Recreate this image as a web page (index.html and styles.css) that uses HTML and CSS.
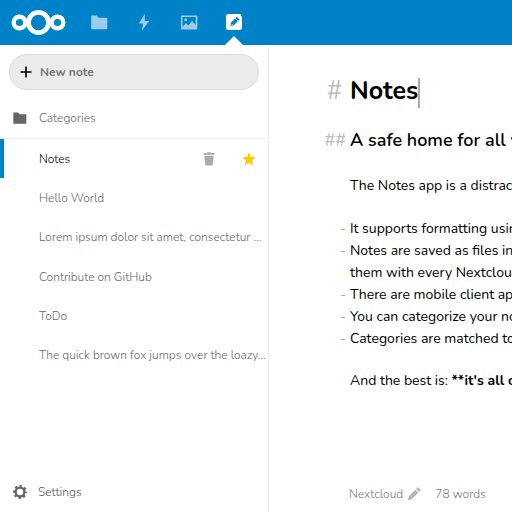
FILE: index.html
```html
<!DOCTYPE html>
<html lang="en">
<head>
<meta charset="utf-8">
<title>Notes - Nextcloud</title>
<link rel="stylesheet" href="styles.css">
</head>
<body>
<header class="topbar">
  <a class="logo" href="#" aria-label="Nextcloud">
    <svg width="56" height="26" viewBox="0 0 56 26" fill="none" stroke="#fff" stroke-width="4.400"><circle cx="27.500" cy="13.500" r="10.1" stroke-width="4.800"/><circle cx="8.500" cy="13.500" r="5.800"/><circle cx="46.500" cy="13.500" r="5.800"/></svg>
  </a>
  <nav class="apps">
    <a class="app" href="#" aria-label="Files"><svg width="18" height="18" viewBox="0 0 18 18"><path fill="currentColor" d="M1.500 2.500h5.200l2 2.200H16.600q.7 0 .7.800v10q0 .8-.7.800H1.900q-.7 0-.7-.8V3.300q0-.8.300-.8z"/></svg></a>
    <a class="app" href="#" aria-label="Activity"><svg width="18" height="18" viewBox="0 0 18 18"><path fill="currentColor" d="M9.800 1 3.800 10.500h4.200L7 17.500 14.200 8h-4.400z"/></svg></a>
    <a class="app" href="#" aria-label="Photos"><svg width="18" height="18" viewBox="0 0 18 18"><path fill="currentColor" fill-rule="evenodd" d="M1.700 2.500h14.800q.8 0 .8.800v12.400q0 .8-.8.800H1.700q-.8 0-.8-.8V3.300q0-.8.8-.8zM2.500 4.100v10.100l3.400-4.200 2.400 2.600L12 8l3.700 4V4.100z"/><circle cx="5.700" cy="6.800" r="1.500" fill="currentColor"/></svg></a>
    <a class="app app-active" href="#" aria-label="Notes" aria-current="page"><svg width="18" height="18" viewBox="0 0 18 18"><path fill="#fff" d="M3.500 1H14.500q1.200 0 1.800.6-.2.600-.6 1 1.300 1 1.300 2.400v9.500Q17 17 14.500 17h-11Q1 17 1 14.500v-11Q1 1 3.500 1z"/><path fill="#0082c9" d="m5.200 13.500.9-4L11.800 3.800l2.800 2.800-5.700 5.700z"/><path stroke="#fff" stroke-width=".9" d="m10.200 5.200 3 3M6.200 12.500l1.500-1.500"/></svg></a>
  </nav>
</header>
<div class="layout">
  <aside class="sidebar">
    <button class="new-note" type="button"><svg width="12" height="12" viewBox="0 0 12 12"><path d="M6 .5v11M.5 6h11" stroke="#000" stroke-width="1.600"/></svg>New note</button>
    <a class="categories" href="#"><svg width="14" height="14" viewBox="0 0 14 14"><path fill="#666" d="M.3 1.500h4.800l1.600 1.700h6.600v9.600H.3z"/></svg>Categories</a>
    <ul class="notes">
      <li class="note note-active"><a class="note-title" href="#">Notes</a>
        <button class="note-action" type="button" aria-label="Delete note"><svg width="14" height="14" viewBox="0 0 14 14"><path fill="#aaa" d="M5 1q0-.8.800-.8h2.500q.8 0 .8.800h3.400v1.800H1.500V1zM2.300 3.800h9.400l-1 8.700q-.1 1-1 1H4.300q-.9 0-1-1z"/></svg></button>
        <button class="note-action" type="button" aria-label="Favorite"><svg width="14" height="14" viewBox="0 0 14 14"><path fill="#fc0" d="m7 .3 1.900 4.800 4.900.2-3.900 3.200 1.500 5L7 10.700l-4.400 2.800 1.500-5L.2 5.300l4.900-.2z"/></svg></button></li>
      <li class="note"><a class="note-title" href="#">Hello World</a></li>
      <li class="note"><a class="note-title" href="#">Lorem ipsum dolor sit amet, consectetur ...</a></li>
      <li class="note"><a class="note-title" href="#">Contribute on GitHub</a></li>
      <li class="note"><a class="note-title" href="#">ToDo</a></li>
      <li class="note"><a class="note-title" href="#">The quick brown fox jumps over the loazy...</a></li>
    </ul>
    <button class="settings" type="button"><svg width="14" height="14" viewBox="0 0 14 14" fill="none" stroke="#666"><circle cx="7" cy="7" r="4.400" stroke-width="2.400"/><circle cx="7" cy="7" r="6" stroke-width="2" stroke-dasharray="2.356" stroke-dashoffset="1.178"/></svg>Settings</button>
  </aside>
  <main class="editor">
    <article class="document">
      <div class="line title"><span class="mark">#</span><h1 class="text">Notes<span class="caret"></span></h1></div>
      <div class="line subtitle"><span class="mark">##</span><h2 class="text">A safe home for all your notes</h2></div>
      <p class="line intro"><span class="text">The Notes app is a distraction free notes taking app</span></p>
      <ul class="points">
        <li class="line"><span class="mark">-</span><span class="text">It supports formatting using Markdown syntax</span></li>
        <li class="line"><span class="mark">-</span><span class="text">Notes are saved as files in your Nextcloud<br>them with every Nextcloud client</span></li>
        <li class="line"><span class="mark">-</span><span class="text">There are mobile client apps available</span></li>
        <li class="line"><span class="mark">-</span><span class="text">You can categorize your notes</span></li>
        <li class="line"><span class="mark">-</span><span class="text">Categories are matched to folders</span></li>
      </ul>
      <p class="line"><span class="text">And the best is: <strong>**it's all open source**</strong></span></p>
    </article>
    <footer class="meta"><span>Nextcloud</span><button class="edit" type="button" aria-label="Edit category"><svg width="14" height="14" viewBox="0 0 14 14"><path fill="#b5b5b5" d="m.8 13.200 1-4 6.500-6.500 3 3-6.500 6.500zM9 2l1.300-1.300q.7-.5 1.400 0l1.600 1.600q.5.700 0 1.400L12 5z"/></svg></button><span>78 words</span></footer>
  </main>
</div>
</body>
</html>
```
FILE: styles.css
```css
* { box-sizing: border-box; }
body {
  margin: 0;
  min-height: 100vh;
  display: flex;
  flex-direction: column;
  font: 300 12px/20px Nunito, Lato, sans-serif;
  color: #555;
  background: #fff;
  overflow: hidden;
}
a { color: inherit; text-decoration: none; }
button { font: inherit; color: inherit; border: 0; padding: 0; background: none; }
svg { display: block; flex: none; }
h1, h2, p, ul { margin: 0; padding: 0; list-style: none; }

.topbar { display: flex; height: 45px; background: #0082c9; padding: 0 0 1px 11px; }
.logo { display: flex; align-items: center; width: 65px; }
.apps { display: flex; }
.app { display: flex; width: 45px; align-items: center; justify-content: center; color: #99cde9; }
.app-active { position: relative; }
.app-active::after {
  content: "";
  position: absolute;
  bottom: -1px;
  border: 9px solid transparent;
  border-top: 0;
  border-bottom-color: #fff;
}

.layout { display: flex; flex: 1; }
.sidebar { display: flex; flex-direction: column; flex: none; width: 269px; border-right: 1px solid #ededed; }
.new-note {
  display: flex;
  align-items: center;
  gap: 8px;
  height: 36px;
  margin: 9px 9px 8px;
  padding-left: 10px;
  border: 1px solid #dbdbdb;
  border-radius: 18px;
  background: #ebebeb;
  color: #777;
  font-weight: 700;
}
.categories { display: flex; align-items: center; gap: 12px; height: 40px; padding-left: 13px; color: #666; }
.notes { display: grid; grid-template-columns: minmax(0, 1fr); grid-auto-rows: 1fr; height: 237px; border-top: 1px solid #ededed; }
.note { display: flex; align-items: center; padding: 0 8px 0 39px; color: #666; white-space: nowrap; }
.note-active { border-left: 4px solid #0082c9; padding: 0 12px 0 35px; color: #000; }
.note-title { flex: 1; }
.note-action { margin-left: 26px; }
.settings { display: flex; align-items: center; gap: 11px; height: 40px; margin-top: auto; padding-left: 13px; }

.editor { display: flex; flex-direction: column; flex: 1; min-width: 0; }
.document { padding: 30px 0 0 41px; font-size: 14px; font-weight: 400; line-height: 22px; color: #000; white-space: nowrap; overflow: hidden; }
.line { display: grid; grid-template-columns: 36px 1fr; column-gap: 4px; }
.mark { text-align: right; color: #aaa; }
.text { grid-column: 2; }
.line .text { font-weight: inherit; }
.title { font-size: 25px; line-height: 32px; margin-bottom: 20px; font-weight: 700; }
.subtitle { font-size: 18px; line-height: 24px; margin-bottom: 23px; font-weight: 600; }
h1, h2 { font-size: inherit; }
.title .mark, .subtitle .mark { font-weight: 400; color: #bbb; }
.title .mark { margin-right: 4px; }
.caret { display: inline-block; width: 2px; height: 30px; background: #aaa; vertical-align: middle; }
.intro { margin-bottom: 21px; }
.points { margin-bottom: 20px; }
.meta { display: flex; align-items: center; margin-top: auto; padding: 0 0 8px 80px; color: #777; }
.edit { margin: 0 14px 0 4px; }
strong { font-weight: 700; }
```
